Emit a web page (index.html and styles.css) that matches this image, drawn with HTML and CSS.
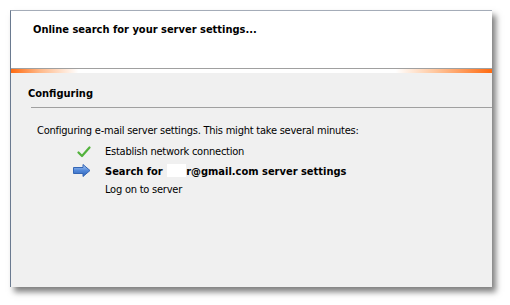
FILE: index.html
```html
<!DOCTYPE html>
<html lang="en">

<head>
    <meta charset="UTF-8">
    <meta name="viewport" content="width=device-width, initial-scale=1.0">
    <title>Add New Account</title>
    <link rel="stylesheet" href="styles.css">
</head>

<body>
    <div class="window">
        <div class="header">
            <h1>Online search for your server settings...</h1>
        </div>
        <div class="band"></div>
        <div class="content">
            <h2>Configuring</h2>
            <div class="rule"></div>
            <p class="intro">Configuring e-mail server settings. This might take several minutes:</p>
            <ul class="steps">
                <li>
                    <span class="icon check">
                        <svg width="14" height="12" viewBox="0 0 14 12">
                            <path d="M1.5 6.5 L5 10 L12.5 1.5" fill="none" stroke="#52b23c" stroke-width="2.2" stroke-linecap="round" stroke-linejoin="round" />
                        </svg>
                    </span>
                    <span class="plain">Establish network connection</span>
                </li>
                <li class="current">
                    <span class="icon">
                        <svg width="18" height="13" viewBox="0 0 18 13">
                            <defs>
                                <linearGradient id="arr" x1="0" y1="0" x2="0" y2="1">
                                    <stop offset="0" stop-color="#b4d0f4" />
                                    <stop offset="0.5" stop-color="#5389da" />
                                    <stop offset="1" stop-color="#2c60b6" />
                                </linearGradient>
                            </defs>
                            <path d="M0.5 3.5 H10 V0.5 L17 6.5 L10 12.5 V9.5 H0.5 Z" fill="url(#arr)" stroke="#3466b5" stroke-width="1" stroke-linejoin="round" />
                        </svg>
                    </span>
                    <span>Search for <span class="redact"></span>r@gmail.com server settings</span>
                </li>
                <li>
                    <span class="icon"></span>
                    <span class="plain">Log on to server</span>
                </li>
            </ul>
        </div>
    </div>
</body>

</html>
```

FILE: styles.css
```css
* {
    margin: 0;
    padding: 0;
}

body {
    background: #fff;
    font-family: Tahoma, "DejaVu Sans Condensed", "DejaVu Sans", sans-serif;
    font-size: 11px;
    color: #000;
    height: 305px;
}

.window {
    margin: 10px 0 0 10px;
    width: 481px;
    height: 276px;
    background: #f0f0f0;
    border-left: 1px solid #6a7a90;
    border-top: 1px solid #a4acb8;
    box-shadow: 4px 5px 6px rgba(0, 0, 0, 0.5);
}

.header {
    height: 58px;
    background: #fff;
    border-bottom: 1px solid #a0a0a0;
    padding: 12px 0 0 22px;
    box-sizing: border-box;
}

h1 {
    font-size: 11px;
    font-weight: bold;
}

.band {
    height: 4px;
    background: linear-gradient(to right, #ff6a10 0, #ffb888 6%, #fff 14%, #fff 80%, #ffc8a0 88%, #ff6a10 100%);
}

.content {
    padding: 14px 0 0 17px;
}

h2 {
    font-size: 11px;
    font-weight: bold;
    height: 16px;
}

.rule {
    height: 1px;
    margin: 4px 0 0 3px;
    background: #a0a0a0;
}

.intro {
    margin: 16px 0 0 9px;
    letter-spacing: -0.23px;
}

.plain {
    letter-spacing: -0.23px;
}

.steps {
    list-style: none;
    margin: 5px 0 0 77px;
}

.steps li {
    display: flex;
    align-items: center;
    height: 19px;
}

.icon {
    width: 32px;
    display: flex;
    margin-left: -32px;
}

.check svg {
    margin-left: 4px;
}

.current {
    font-weight: bold;
}

.redact {
    display: inline-block;
    width: 19px;
    height: 13px;
    background: #fff;
    vertical-align: -2px;
    margin-left: 1px;
}
```
